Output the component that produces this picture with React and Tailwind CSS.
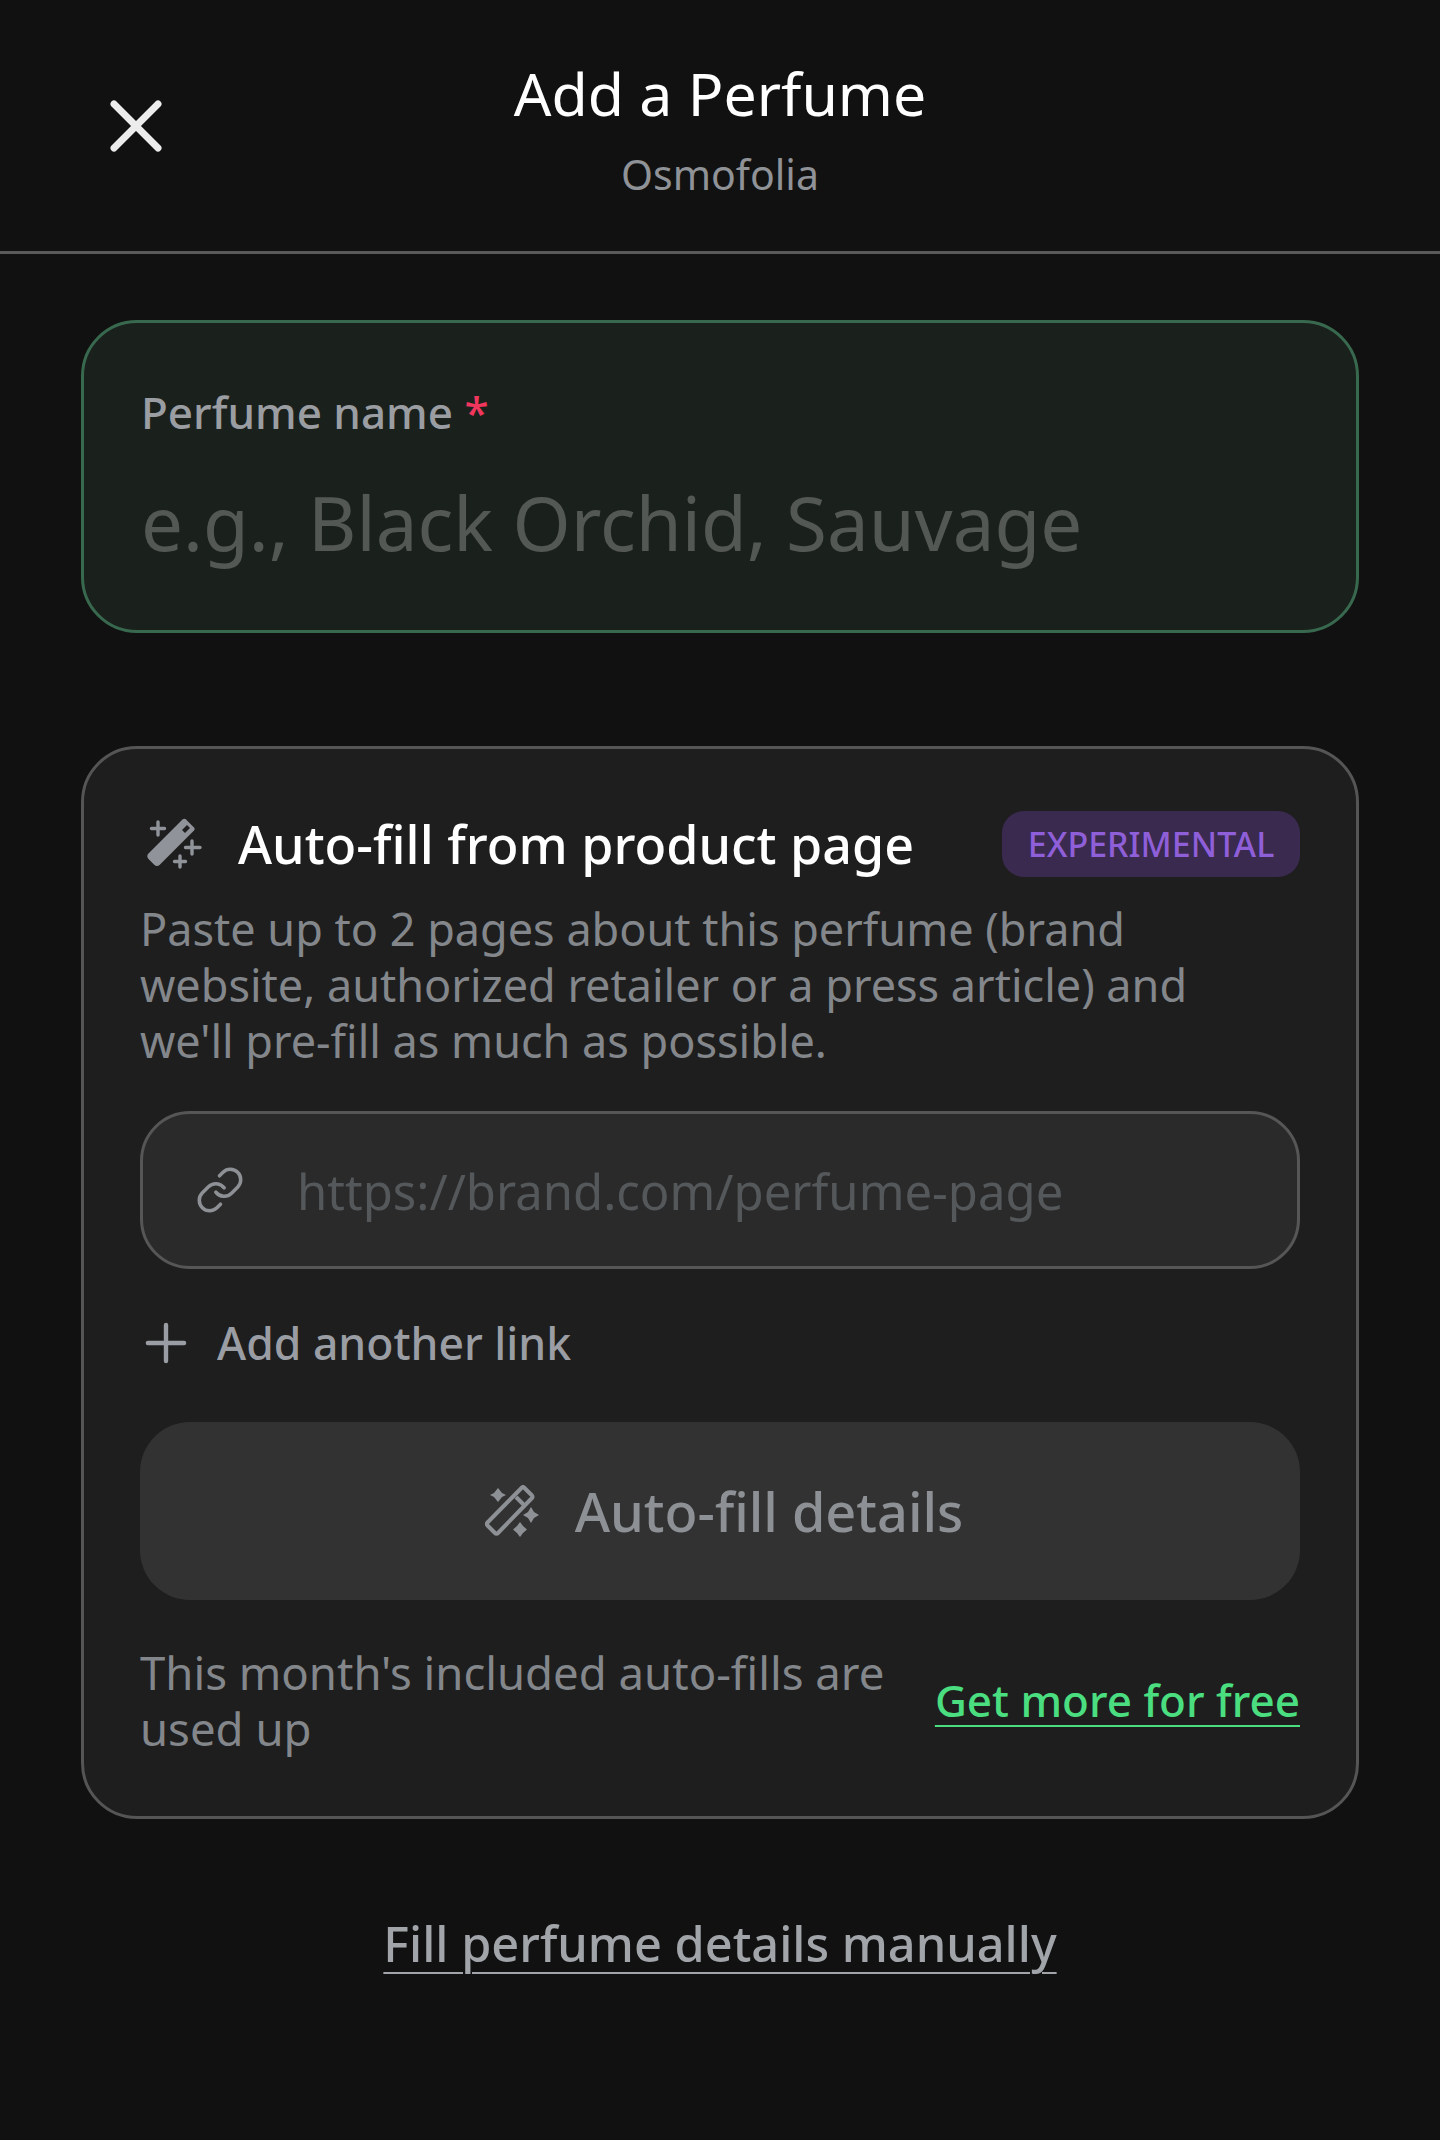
import { Link, Plus, X } from 'lucide-react';

const font = { fontFamily: '"Noto Sans", sans-serif' };

const WandFilled = ({ className = '' }) => (
    <svg viewBox="0 0 56 52" className={className} fill="none">
        <path
            d="M40 1.5 L48 9.5 Q49.5 11 48 12.5 L14 46.5 Q11 49.5 8 46.5 L2.5 41 Q0 38 2.5 35.5 L36.5 1.5 Q38.5 0 40 1.5 Z"
            fill="currentColor"
        />
        <path d="M36 12 L41 7 L44 10 L39 15 Z" fill="#1e1e1e" />
        <path d="M12 4 V17 M5.5 10.5 H18.5 M46 23 V36 M39.5 29.5 H54 M34 38 V49 M28.5 43.5 H39.5" stroke="currentColor" strokeWidth="3.4" strokeLinecap="round" />
    </svg>
);

const WandOutline = ({ className = '' }) => (
    <svg viewBox="0 0 56 52" className={className} fill="none" stroke="currentColor" strokeWidth="4" strokeLinejoin="round">
        <path d="M39 2.5 L47 10.5 Q48 12 47 13 L13 48 Q11.5 49.5 10 48 L2.5 40.5 Q1 39 2.5 37.5 L37 2.5 Q38 1.5 39 2.5 Z" />
        <path d="M31 12 L38.5 19.5" />
        <path d="M13 3 L17 8 L21 10 L17 12 L13 17 L9 12 L5 10 L9 8 Z" fill="currentColor" stroke="none" />
        <path d="M46 22 L49 27 L54 30 L49 33 L46 38 L43 33 L38 30 L43 27 Z" fill="currentColor" stroke="none" />
        <path d="M35 37 L38 41 L42 44.5 L38 48 L35 52 L32 48 L28 44.5 L32 41 Z" fill="currentColor" stroke="none" />
    </svg>
);

export default function App() {
    return (
        <div style={font} className="min-h-[2140px] bg-[#111111] text-white">
            <header className="relative h-[254px] border-b-[3px] border-[#5a5a5a] flex flex-col items-center pt-[58px]">
                <button className="absolute left-[92px] top-[82px] text-[#ececec]">
                    <X className="w-[88px] h-[88px]" strokeWidth={1.9} />
                </button>
                <h1 className="text-[59px] leading-[70px] text-white">Add a Perfume</h1>
                <p className="mt-[21px] text-[41px] leading-[50px] text-[#8f9296]">Osmofolia</p>
            </header>

            <main className="px-[81px] pt-[66px]">
                <section className="h-[313px] rounded-[56px] border-[3px] border-[#38694f] bg-[#1a211d] px-[57px] pt-[59px]">
                    <label className="block text-[44px] leading-[60px] font-medium text-[#9a9da1]">
                        Perfume name <span className="text-[#f0365c]">*</span>
                    </label>
                    <div className="mt-[35px] text-[74.5px] leading-[90px] text-[#545855]">e.g., Black Orchid, Sauvage</div>
                </section>

                <section className="mt-[113px] h-[1073px] rounded-[56px] border-[3px] border-[#555555] bg-[#1e1e1e] px-[56px] pt-[62px]">
                    <div className="flex items-center justify-between h-[66px]">
                        <div className="flex items-center gap-[36px] ml-[6px]">
                            <WandFilled className="w-[56px] h-[52px] text-[#90949a]" />
                            <h2 className="text-[52px] leading-[66px] font-medium text-white">Auto-fill from product page</h2>
                        </div>
                        <span className="flex items-center justify-center w-[298px] h-[66px] rounded-[22px] bg-[#3a2a4f] text-[34px] font-medium text-[#8e5fd8]">
                            EXPERIMENTAL
                        </span>
                    </div>

                    <p className="mt-[24px] text-[45px] leading-[56px] text-[#83878b]">
                        Paste up to 2 pages about this perfume (brand
                        <br />
                        website, authorized retailer or a press article) and
                        <br />
                        we'll pre-fill as much as possible.
                    </p>

                    <div className="mt-[42px] h-[158px] rounded-[50px] border-[3px] border-[#565656] bg-[#2a2a2a] flex items-center pl-[52px]">
                        <Link className="w-[50px] h-[50px] text-[#8d9094] shrink-0" strokeWidth={1.7} />
                        <span className="ml-[52px] pt-[2px] text-[49px] leading-[60px] text-[#55585a]">https://brand.com/perfume-page</span>
                    </div>

                    <div className="mt-[41px] flex items-center h-[66px] text-[#9a9ea4]">
                        <Plus className="w-[62px] h-[62px] -ml-[5px] shrink-0" strokeWidth={1.7} />
                        <span className="ml-[20px] text-[44.5px] leading-[60px] font-medium">Add another link</span>
                    </div>

                    <button className="mt-[46px] w-full h-[178px] rounded-[50px] bg-[#323232] flex items-center justify-center gap-[34px] pl-[8px] text-[#8d9095]">
                        <WandOutline className="w-[56px] h-[52px]" />
                        <span className="text-[54px] leading-[66px] font-medium">Auto-fill details</span>
                    </button>

                    <div className="mt-[44px] flex items-center justify-between">
                        <p className="text-[45.5px] leading-[56px] text-[#83878b]">
                            This month's included auto-fills are
                            <br />
                            used up
                        </p>
                        <a className="text-[44px] leading-[60px] font-medium text-[#4ade80] underline underline-offset-[8px] decoration-[2px]">
                            Get more for free
                        </a>
                    </div>
                </section>

                <div className="mt-[92px] flex justify-center">
                    <a className="text-[48.7px] leading-[64px] font-medium text-[#a1a5aa] underline underline-offset-[10px] decoration-[2px]">
                        Fill perfume details manually
                    </a>
                </div>
            </main>
        </div>
    );
}
